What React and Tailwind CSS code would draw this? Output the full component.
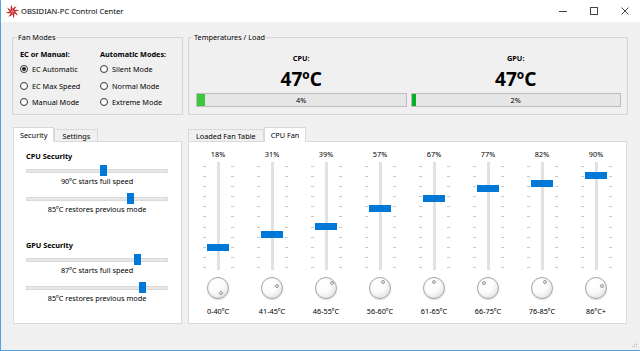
import React from "react";

const FANS = [
  { pct: 18, range: "0-40ºC", dot: [3, 5] },
  { pct: 31, range: "41-45ºC", dot: [5, -2] },
  { pct: 39, range: "46-55ºC", dot: [6, -5] },
  { pct: 57, range: "56-60ºC", dot: [3, -6] },
  { pct: 67, range: "61-65ºC", dot: [0, -6] },
  { pct: 77, range: "66-75ºC", dot: [-4, -5] },
  { pct: 82, range: "76-85ºC", dot: [3, -6] },
  { pct: 90, range: "86ºC+", dot: [6, -2] },
];

const CPU_LIMITS = [
  { left: 74, text: "90ºC starts full speed" },
  { left: 100.5, text: "85ºC restores previous mode" },
];
const GPU_LIMITS = [
  { left: 107.5, text: "87ºC starts full speed" },
  { left: 112.5, text: "85ºC restores previous mode" },
];

function FanLogo() {
  const blades = [0, 45, 90, 135, 180, 225, 270, 315];
  return (
    <svg width="13" height="13" viewBox="0 0 24 24">
      {blades.map((a) => (
        <path
          key={a}
          d="M12 8.5 C13.5 5 16 2.5 20 2.8 C17.5 4.5 16 6.8 15.2 10 Z"
          fill="#c62a2f"
          transform={`rotate(${a} 12 12)`}
        />
      ))}
      <circle cx="12" cy="12" r="4" fill="#c62a2f" />
      <circle cx="12" cy="12" r="2" fill="#fff" />
      <circle cx="12" cy="12" r="1" fill="#c62a2f" />
    </svg>
  );
}

function TitleBar() {
  return (
    <div className="h-[22px] bg-white flex items-center shrink-0">
      <div className="ml-[5px] flex items-center">
        <FanLogo />
      </div>
      <span className="ml-[2px] text-[7.6px]">OBSIDIAN-PC Control Center</span>
      <div className="ml-auto flex h-full">
        <div className="w-[31px] h-full flex items-center justify-center">
          <div className="w-[8px] h-px bg-[#444]" />
        </div>
        <div className="w-[31px] h-full flex items-center justify-center">
          <div className="w-[8px] h-[8px] border border-[#444]" />
        </div>
        <div className="w-[31px] h-full flex items-center justify-center">
          <svg width="8" height="8" viewBox="0 0 8 8">
            <path d="M0.5 0.5 L7.5 7.5 M7.5 0.5 L0.5 7.5" stroke="#444" strokeWidth="1" />
          </svg>
        </div>
      </div>
    </div>
  );
}

function GroupBox({ title, className, children }) {
  return (
    <fieldset className={`border border-[#d5d5d5] h-[83px] min-w-0 ${className}`}>
      <legend className="ml-[4px] px-[1px] leading-[10px]">{title}</legend>
      {children}
    </fieldset>
  );
}

function Radio({ label, checked }) {
  return (
    <div className="flex items-center h-[16.5px]">
      <span className="w-[8px] h-[8px] rounded-full border border-[#333] bg-white flex items-center justify-center">
        {checked && <span className="w-[4px] h-[4px] rounded-full bg-[#222]" />}
      </span>
      <span className="ml-[4px]">{label}</span>
    </div>
  );
}

function LoadBar({ pct, fill }) {
  return (
    <div className="relative w-full h-[14px] mt-[3px] border border-[#bcbcbc] bg-[#e6e6e6] flex items-center justify-center">
      <div className={`absolute left-0 top-0 bottom-0 ${fill}`} style={{ width: `${pct}%` }} />
      <span className="relative">{pct}%</span>
    </div>
  );
}

function Tabs({ tabs, active }) {
  return (
    <div className="flex items-end h-[14px]">
      {tabs.map((t, i) =>
        i === active ? (
          <div
            key={t}
            className="relative z-10 h-[15px] -mb-px bg-white border border-b-0 border-[#d9d9d9] px-[6px] flex items-center"
          >
            {t}
          </div>
        ) : (
          <div
            key={t}
            className="h-[12px] bg-[#f0f0f0] border border-b-0 border-[#d9d9d9] px-[7px] flex items-center"
          >
            {t}
          </div>
        )
      )}
    </div>
  );
}

function HSlider({ left, className }) {
  return (
    <div className={`relative h-[11px] ml-[12px] mr-[13px] flex items-center ${className}`}>
      <div className="w-full h-[4px] bg-[#e7e7e7] border border-[#dadada]" />
      <div className="absolute top-0 w-[7px] h-[11px] bg-[#0078d7]" style={{ left }} />
    </div>
  );
}

function Ticks() {
  return (
    <div className="h-full w-[3px] flex flex-col justify-between pt-[4px] pb-[2px]">
      {Array.from({ length: 11 }, (_, i) => (
        <div key={i} className="h-px bg-[#c6c6c6]" />
      ))}
    </div>
  );
}

function FanColumn({ pct, range, dot }) {
  return (
    <div className="w-[54px] flex flex-col items-center">
      <div className="leading-[10px]">{pct}%</div>
      <div className="relative mt-[3px] h-[108px] w-full flex justify-center">
        <Ticks />
        <div className="w-[11px]" />
        <div className="h-full w-[3px] bg-[#e1e1e1]" />
        <div className="w-[11px]" />
        <Ticks />
        <div
          className="absolute left-1/2 -translate-x-1/2 w-[22px] h-[7px] bg-[#0078d7]"
          style={{ top: 100.5 - pct * 1.01 }}
        />
      </div>
      <div className="relative mt-[7px] w-[22px] h-[22px] rounded-full border border-[#a3a3a3] bg-[radial-gradient(circle_at_35%_30%,#ffffff_0%,#fbfbfb_45%,#d6d6d6_100%)] shadow-[0_1px_1px_rgba(0,0,0,0.15)]">
        <div
          className="absolute w-[4px] h-[4px] rounded-full border border-[#9c9c9c] bg-[#e8e8e8]"
          style={{ left: 10 + dot[0] - 2, top: 10 + dot[1] - 2 }}
        />
      </div>
      <div className="mt-[7px] leading-[10px]">{range}</div>
    </div>
  );
}

function LimitBlock({ title, limits, className }) {
  return (
    <div className={className}>
      <div className="ml-[12px] font-bold leading-[10px]">{title}</div>
      <HSlider left={limits[0].left} className="mt-[4px]" />
      <div className="text-center leading-[10px] pl-[12px] pr-[13px]">{limits[0].text}</div>
      <HSlider left={limits[1].left} className="mt-[7px]" />
      <div className="text-center leading-[10px] pl-[12px] pr-[13px]">{limits[1].text}</div>
    </div>
  );
}

export default function App() {
  return (
    <div className="relative w-[640px] h-[351px] overflow-hidden bg-[#f0f0f0] border-l border-b border-[#4ea3e6] flex flex-col text-black text-[7.3px] leading-[10px] font-['Noto_Sans',sans-serif]">
      <TitleBar />

      {/* Fan modes + temperatures */}
      <div className="flex mt-[10px] pl-[11px] pr-[12px] gap-[5px]">
        <GroupBox title="Fan Modes" className="w-[171px]">
          <div className="flex pl-[7px] pt-[7px]">
            <div className="w-[80px]">
              <div className="font-bold leading-[10px]">EC or Manual:</div>
              <div className="mt-[2px]">
                <Radio label="EC Automatic" checked />
                <Radio label="EC Max Speed" />
                <Radio label="Manual Mode" />
              </div>
            </div>
            <div>
              <div className="font-bold leading-[10px]">Automatic Modes:</div>
              <div className="mt-[2px]">
                <Radio label="Silent Mode" />
                <Radio label="Normal Mode" />
                <Radio label="Extreme Mode" />
              </div>
            </div>
          </div>
        </GroupBox>

        <GroupBox title="Temperatures / Load" className="flex-1">
          <div className="grid grid-cols-2 gap-x-[4px] pl-[7px] pr-[6px] pt-[11px]">
            <div className="flex flex-col items-center">
              <div className="font-bold leading-[10px]">CPU:</div>
              <div className="mt-[5px] text-[19px] leading-[22px] font-bold">47ºC</div>
              <LoadBar pct={4} fill="bg-[#3ec63e]" />
            </div>
            <div className="flex flex-col items-center">
              <div className="font-bold leading-[10px]">GPU:</div>
              <div className="mt-[5px] text-[19px] leading-[22px] font-bold">47ºC</div>
              <LoadBar pct={2} fill="bg-[#06b025]" />
            </div>
          </div>
        </GroupBox>
      </div>

      {/* Tab widgets */}
      <div className="flex mt-[12px] pl-[12px] pr-[13px] gap-[6px]">
        <div className="w-[169px]">
          <Tabs tabs={["Security", "Settings"]} active={0} />
          <div className="h-[183px] bg-white border border-[#d9d9d9] pt-[9px]">
            <LimitBlock title="CPU Security" limits={CPU_LIMITS} />
            <LimitBlock title="GPU Security" limits={GPU_LIMITS} className="mt-[26px]" />
          </div>
        </div>

        <div className="flex-1">
          <Tabs tabs={["Loaded Fan Table", "CPU Fan"]} active={1} />
          <div className="h-[183px] bg-white border border-[#d9d9d9] pt-[7px] pl-[2px] flex">
            {FANS.map((f) => (
              <FanColumn key={f.range} {...f} />
            ))}
          </div>
        </div>
      </div>

      {/* resize grip */}
      <svg className="absolute right-[2px] bottom-[2px]" width="6" height="6" viewBox="0 0 6 6">
        <rect x="4" y="0" width="1" height="1" fill="#b5b5b5" />
        <rect x="2" y="2" width="1" height="1" fill="#b5b5b5" />
        <rect x="4" y="2" width="1" height="1" fill="#b5b5b5" />
        <rect x="0" y="4" width="1" height="1" fill="#b5b5b5" />
        <rect x="2" y="4" width="1" height="1" fill="#b5b5b5" />
        <rect x="4" y="4" width="1" height="1" fill="#b5b5b5" />
      </svg>
    </div>
  );
}
